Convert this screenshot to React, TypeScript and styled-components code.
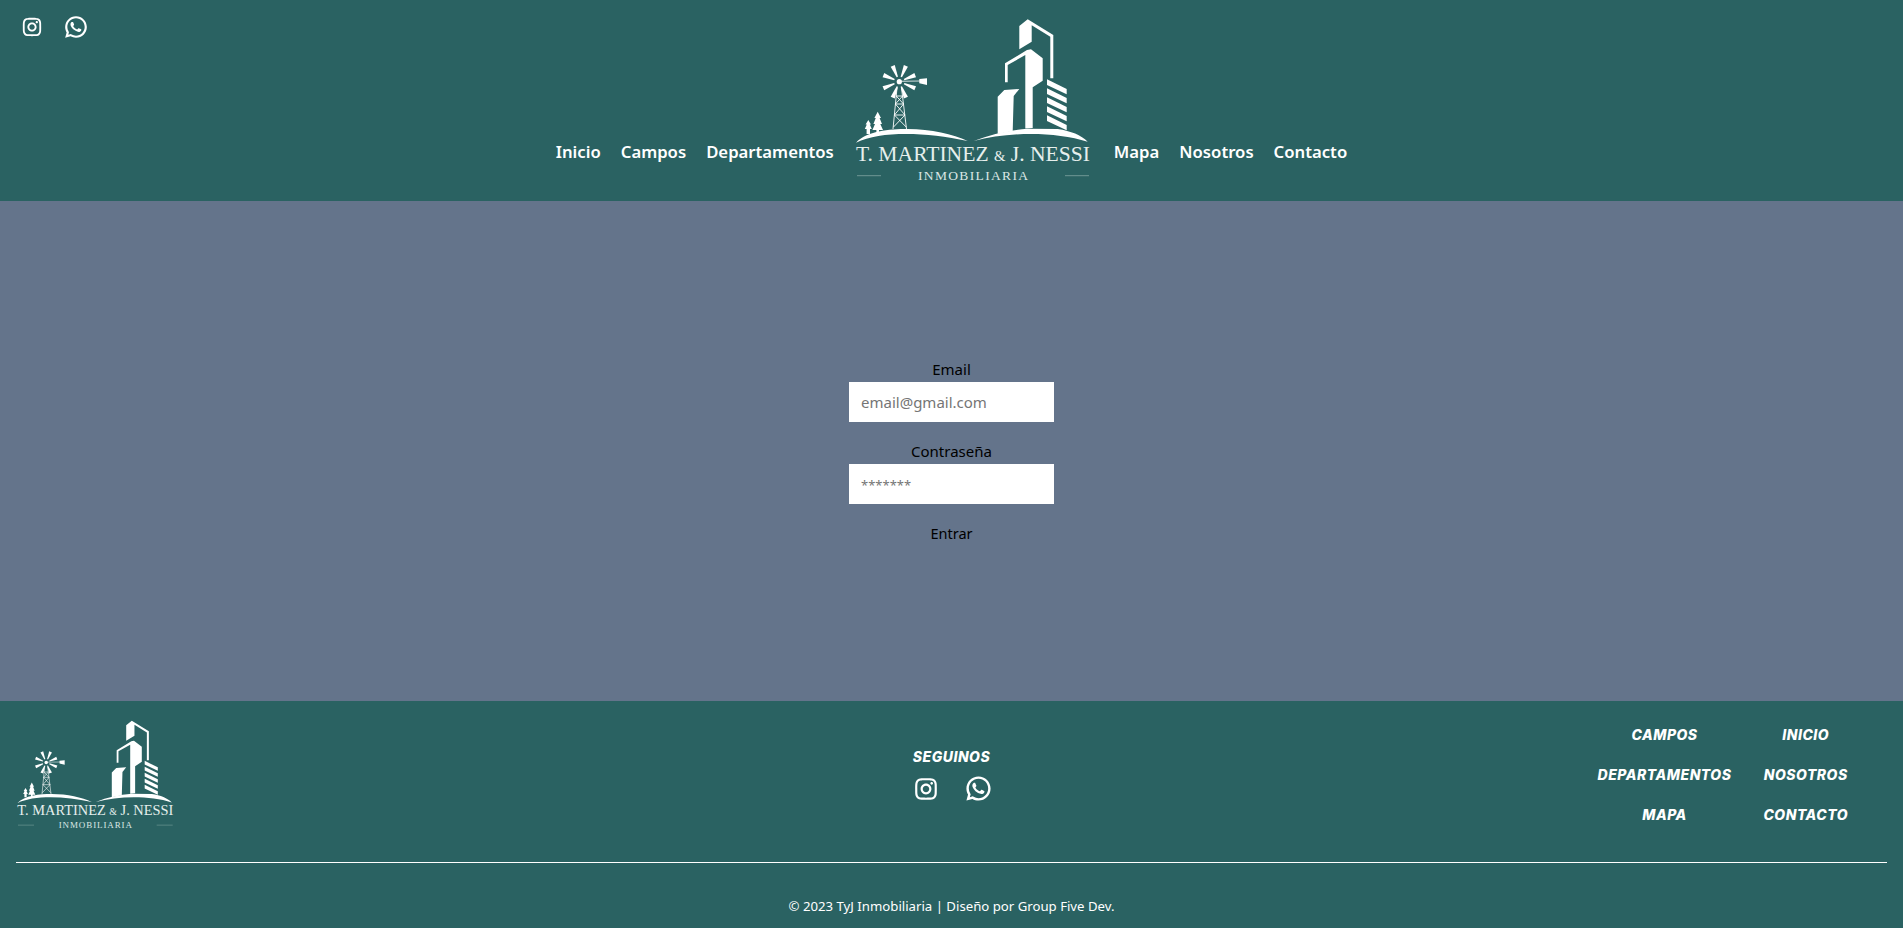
import React from 'react';
import styled, { createGlobalStyle } from 'styled-components';
import { RiInstagramLine, RiWhatsappLine } from 'react-icons/ri';

const UI_FONT = '"Noto Sans", "Open Sans", sans-serif';
const TEAL = '#2a6262';

const GlobalStyle = createGlobalStyle`
    html, body {
        margin: 0;
        padding: 0;
    }
    body {
        font-family: ${UI_FONT};
        background: #64748b;
    }
`;

const NAV_LEFT = ['Inicio', 'Campos', 'Departamentos'];
const NAV_RIGHT = ['Mapa', 'Nosotros', 'Contacto'];
const FOOTER_LINKS = ['Campos', 'Inicio', 'Departamentos', 'Nosotros', 'Mapa', 'Contacto'];

// aspas del molino, en grados
const BLADES = [22.5, 67.5, 112.5, 157.5, 202.5, 247.5, 292.5, 337.5];
const STRIPES = [0, 1, 2, 3, 4];

const Logo = ({ width, height }: { width: number; height: number }) => (
    <LogoSvg width={width} height={height} viewBox="853 0 240 201" role="img" aria-label="T. Martinez & J. Nessi Inmobiliaria">
        {/* edificios */}
        <polygon points="1018.3,26 1026.7,19.3 1052.3,35 1052.3,78.3 1049.3,78.3 1049.3,36.7 1030.7,25.3 1030.7,41.7 1018.3,49.3" />
        <polygon points="1004,82.3 1004,63.3 1026,50 1030,49.3 1041.7,58.3 1041.7,80.7 1031.7,87.3 1031.7,128 1024.3,128.5 1024.3,55 1006.7,65 1006.7,82.3" />
        <polygon points="996.7,96.7 1003.3,90 1018.3,89 1012.7,96 1011.7,131 996.7,134" />
        {STRIPES.map((i) => {
            const top = 79.3 + i * 9;
            return <polygon key={i} points={`1046,${top} 1065.7,${top + 9.7} 1065.7,${top + 15} 1046,${top + 5.6}`} />;
        })}
        {/* lomas */}
        <path d="M855 142.7 C866 131 888 129 906.7 129 C930 129 952 134 966.7 141 C945 136.5 925 134 905 134 C885 134 868 136.5 855 142.7Z" />
        <path d="M972.7 141 C990 134 1008 130 1026.7 128.7 L1056.7 129 C1070 131 1080 135 1086.7 141.7 C1070 136.5 1050 134 1030 134 C1010 134 990 136.5 972.7 141Z" />
        {/* molino */}
        {BLADES.map((deg) => (
            <polygon key={deg} points="897.6,76.5 899,76.5 900.5,64.5 896.1,64.5" transform={`rotate(${deg} 898.3 81.7)`} />
        ))}
        <circle cx="898.3" cy="81.7" r="2.6" />
        <line x1="898.3" y1="81.3" x2="919" y2="81" stroke="#fff" strokeWidth="0.8" />
        <polygon points="918.3,79 926,78.3 926,85 918.3,83.3" />
        <TowerLines>
            <path d="M896 88 L892 129 M900.5 88 L905.5 129" />
            <path d="M895.2 96 H901.6 L894.4 104 H902.6 L893.4 115 H904 L892.5 127 M895.2 96 L902.6 104 M894.4 104 L904 115 M893.4 115 L905.2 127" />
        </TowerLines>
        {/* arboles */}
        <polygon points="876.7,111.7 880,118 878.6,118 881,124 879.3,124 882,130 878,130 878,133 875.4,133 875.4,130 871.4,130 874,124 872.4,124 874.8,118 873.4,118" />
        <polygon points="867.3,120 870,124.5 868.8,124.5 870.8,129 869,129 869,134 865.6,134 865.6,129 863.8,129 865.8,124.5 864.6,124.5" />
        {/* marca */}
        <LogoName x="855" y="160.7" textLength="234" lengthAdjust="spacingAndGlyphs">
            T. MARTINEZ <LogoAmp>&amp;</LogoAmp> J. NESSI
        </LogoName>
        <LogoSub x="917" y="180" textLength="110" lengthAdjust="spacing">INMOBILIARIA</LogoSub>
        <LogoRule x1="856" y1="175.7" x2="880" y2="175.7" />
        <LogoRule x1="1064" y1="175.7" x2="1088" y2="175.7" />
    </LogoSvg>
);

const App = () => {
    return (
        <Page>
            <GlobalStyle />
            <Header>
                <HeaderSocial>
                    <RiInstagramLine size={22} color="#fff" />
                    <RiWhatsappLine size={26} color="#fff" />
                </HeaderSocial>
                <Nav>
                    {NAV_LEFT.map((item) => (
                        <NavLink key={item} href="#">{item}</NavLink>
                    ))}
                    <Logo width={240} height={201} />
                    {NAV_RIGHT.map((item) => (
                        <NavLink key={item} href="#">{item}</NavLink>
                    ))}
                </Nav>
            </Header>

            <Main>
                <LoginForm onSubmit={(e) => e.preventDefault()}>
                    <Field>
                        <FieldLabel htmlFor="email">Email</FieldLabel>
                        <FieldInput id="email" type="email" placeholder="email@gmail.com" />
                    </Field>
                    <Field>
                        <FieldLabel htmlFor="password">Contraseña</FieldLabel>
                        <FieldInput id="password" type="password" placeholder="*******" $hint="13px" />
                    </Field>
                    <SubmitButton type="submit">Entrar</SubmitButton>
                </LoginForm>
            </Main>

            <Footer>
                <FooterTop>
                    <Logo width={160} height={134} />
                    <FollowBlock>
                        <FollowTitle>Seguinos</FollowTitle>
                        <FollowIcons>
                            <RiInstagramLine size={26} color="#fff" />
                            <RiWhatsappLine size={29} color="#fff" />
                        </FollowIcons>
                    </FollowBlock>
                    <FooterLinks>
                        {FOOTER_LINKS.map((item) => (
                            <FooterLink key={item} href="#">{item}</FooterLink>
                        ))}
                    </FooterLinks>
                </FooterTop>
                <FooterRule />
                <Copyright>© 2023 TyJ Inmobiliaria | Diseño por Group Five Dev.</Copyright>
            </Footer>
        </Page>
    );
};

const Page = styled.div`
    display: flex;
    flex-direction: column;
    height: 928px;
    overflow: hidden;
`;

const Header = styled.header`
    height: 201px;
    flex: none;
    background: ${TEAL};
    display: grid;
    grid-template-columns: minmax(0, 1fr) auto minmax(0, 1fr);
`;

const HeaderSocial = styled.div`
    display: flex;
    align-items: center;
    align-self: start;
    gap: 20px;
    padding: 14px 0 0 21px;
`;

const Nav = styled.nav`
    display: flex;
    align-items: flex-end;
    gap: 20px;
`;

const NavLink = styled.a`
    color: #fff;
    font-size: 16.7px;
    font-weight: 600;
    line-height: 24px;
    text-decoration: none;
    margin-bottom: 37px;
`;

const LogoSvg = styled.svg`
    display: block;
    flex: none;
    fill: #fff;
`;

const TowerLines = styled.g`
    fill: none;
    stroke: #fff;
    stroke-width: 0.9;
`;

const LogoName = styled.text`
    font-family: "Liberation Serif", serif;
    font-size: 20.5px;
    fill: #e6efed;
`;

const LogoAmp = styled.tspan`
    font-size: 14px;
`;

const LogoSub = styled.text`
    font-family: "Liberation Serif", serif;
    font-size: 13.5px;
    fill: #dbe7e5;
`;

const LogoRule = styled.line`
    stroke: #9fbdb9;
    stroke-width: 0.6;
`;

const Main = styled.main`
    flex: 1;
    background: #64748b;
    display: flex;
    align-items: center;
    justify-content: center;
`;

const LoginForm = styled.form`
    display: flex;
    flex-direction: column;
    align-items: center;
    gap: 17px;
`;

const Field = styled.div`
    display: flex;
    flex-direction: column;
    align-items: center;
    gap: 1px;
`;

const FieldLabel = styled.label`
    color: #000;
    font-size: 15px;
    line-height: 24px;
`;

const FieldInput = styled.input<{ $hint?: string }>`
    box-sizing: border-box;
    width: 205px;
    height: 40px;
    border: 0;
    padding: 0 12px;
    background: #fff;
    font-family: ${UI_FONT};
    font-size: 15px;
    outline: none;

    &::placeholder {
        color: #757575;
        font-size: ${(p) => p.$hint || '15px'};
    }
`;

const SubmitButton = styled.button`
    border: 0;
    padding: 0;
    background: transparent;
    color: #000;
    font-family: ${UI_FONT};
    font-size: 14.5px;
    line-height: 24px;
    cursor: pointer;
`;

const Footer = styled.footer`
    height: 227px;
    flex: none;
    background: ${TEAL};
    display: flex;
    flex-direction: column;
    align-items: center;
`;

const FooterTop = styled.div`
    align-self: stretch;
    box-sizing: border-box;
    height: 161px;
    display: grid;
    grid-template-columns: minmax(0, 1fr) auto minmax(0, 1fr);
    padding: 7px 16px 0;
`;

const FollowBlock = styled.div`
    display: flex;
    flex-direction: column;
    align-items: center;
    padding-top: 39px;
    gap: 7px;
`;

const FollowTitle = styled.h4`
    margin: 0;
    color: #fff;
    font-family: Inter, "Liberation Sans", sans-serif;
    font-size: 14px;
    font-style: italic;
    font-weight: 800;
    letter-spacing: 0.5px;
    line-height: 20px;
    text-transform: uppercase;
`;

const FollowIcons = styled.div`
    display: flex;
    align-items: center;
    gap: 25px;
    margin-left: 2px;
`;

const FooterLinks = styled.div`
    justify-self: end;
    align-self: start;
    display: grid;
    grid-template-columns: auto auto;
    column-gap: 32px;
    row-gap: 20px;
    padding: 17px 39px 0 0;
    text-align: center;
`;

const FooterLink = styled.a`
    color: #fff;
    font-family: Inter, "Liberation Sans", sans-serif;
    font-size: 14px;
    font-style: italic;
    font-weight: 800;
    letter-spacing: 0.5px;
    line-height: 20px;
    text-decoration: none;
    text-transform: uppercase;
`;

const FooterRule = styled.hr`
    align-self: stretch;
    height: 1px;
    margin: 0 16px;
    border: 0;
    background: #fff;
`;

const Copyright = styled.p`
    margin: 31px 0 0;
    color: #fff;
    font-size: 13.2px;
    line-height: 24px;
`;

export default App;
